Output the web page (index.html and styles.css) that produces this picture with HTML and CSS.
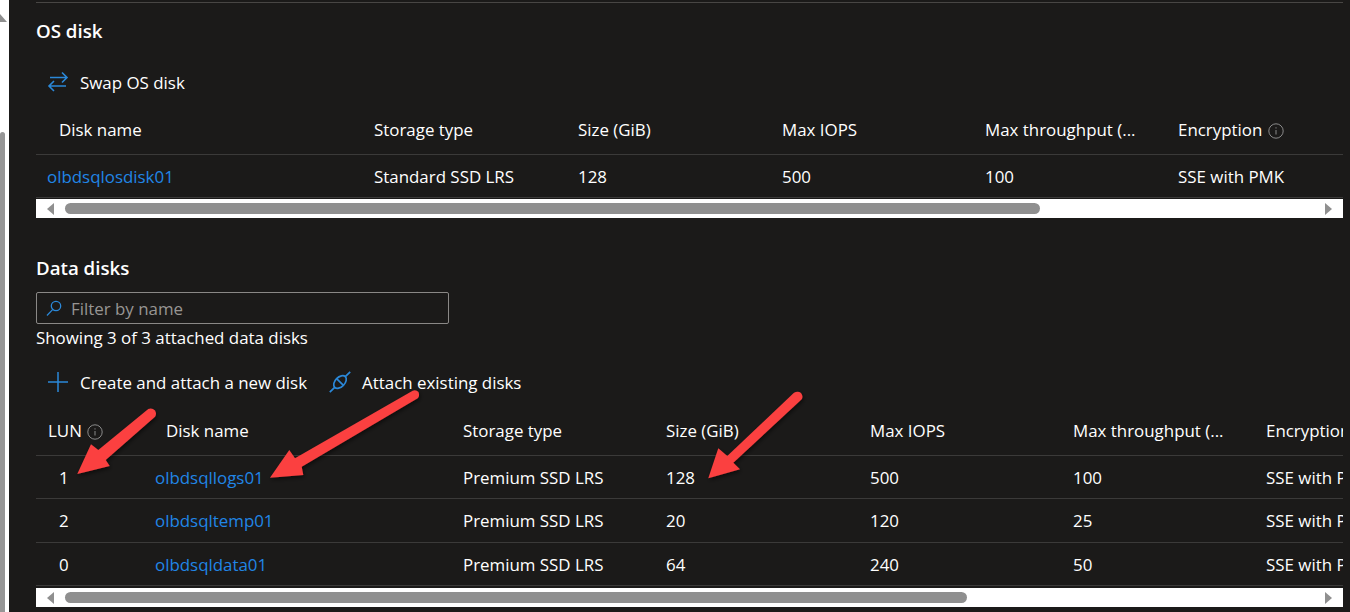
FILE: index.html
```html
<!DOCTYPE html>
<html lang="en">
<head>
<meta charset="utf-8">
<title>Disks</title>
<link rel="stylesheet" href="styles.css">
</head>
<body>
<div class="page">
  <aside class="outer-scroll">
    <div class="outer-track">
      <svg class="outer-arrow" width="9" height="10" viewBox="0 0 9 10"><path d="M0 9 L7 9 L0 1 Z" fill="#8f8f8f"/></svg>
      <div class="outer-thumb"></div>
    </div>
  </aside>
  <main class="content">
    <section class="os-section">
      <h2 class="heading os-heading">OS disk</h2>
      <div class="toolbar os-toolbar">
        <button class="tool swap">
          <svg class="icon" width="22" height="22" viewBox="0 0 22 22" fill="none" stroke="#2b88d8" stroke-width="1.6"><path d="M3 6.500H20M15 1.500L20 6.500L15 11.500"/><path d="M19 15H2M7 10L2 15L7 20"/></svg>
          <span>Swap OS disk</span>
        </button>
      </div>
      <div class="table os-table">
        <div class="row head">
          <div class="cell pad-name">Disk name</div><div class="cell">Storage type</div><div class="cell">Size (GiB)</div><div class="cell">Max IOPS</div><div class="cell">Max throughput (...</div>
          <div class="cell">Encryption <svg class="info" width="16" height="16" viewBox="0 0 16 16"><circle cx="8" cy="8" r="7.2" fill="none" stroke="#8a8a8a"/><path d="M8 7v4.500M8 4.300v1.200" stroke="#8a8a8a"/></svg></div>
        </div>
        <div class="row">
          <div class="cell"><a class="link">olbdsqlosdisk01</a></div><div class="cell">Standard SSD LRS</div><div class="cell">128</div><div class="cell">500</div><div class="cell">100</div><div class="cell">SSE with PMK</div>
        </div>
      </div>
      <div class="hscroll"><i class="arrow-left"></i><div class="track"><div class="thumb os-thumb"></div></div><i class="arrow-right"></i></div>
    </section>

    <section class="data-section">
      <h2 class="heading data-heading">Data disks</h2>
      <div class="filter">
        <svg class="filter-icon" width="16" height="17" viewBox="0 0 16 17" fill="none" stroke="#2b88d8" stroke-width="1.300"><circle cx="10" cy="6" r="4.700"/><path d="M6.600 9.600L1 15.500"/></svg>
        <span>Filter by name</span>
      </div>
      <p class="count">Showing 3 of 3 attached data disks</p>
      <div class="toolbar data-toolbar">
        <button class="tool add">
          <svg class="icon" width="22" height="22" viewBox="0 0 22 22" fill="none" stroke="#2b88d8" stroke-width="1.500"><path d="M11 1V21M1 11H21"/></svg>
          <span>Create and attach a new disk</span>
        </button>
        <button class="tool attach">
          <svg class="icon" width="22" height="22" viewBox="0 0 22 22" fill="none" stroke="#2b88d8" stroke-width="1.700"><ellipse cx="11" cy="11" rx="7.500" ry="4.800" transform="rotate(-45 11 11)"/><path d="M7.800 7.800L14.200 14.200M0.800 21.200L5.700 16.300M16.300 5.700L21.200 0.800"/></svg>
          <span>Attach existing disks</span>
        </button>
      </div>
      <div class="table data-table">
        <div class="row head">
          <div class="cell lun-head">LUN <svg class="info" width="16" height="16" viewBox="0 0 16 16"><circle cx="8" cy="8" r="7.200" fill="none" stroke="#8a8a8a"/><path d="M8 7v4.500M8 4.300v1.200" stroke="#8a8a8a"/></svg></div>
          <div class="cell pad-name">Disk name</div><div class="cell">Storage type</div><div class="cell">Size (GiB)</div><div class="cell">Max IOPS</div><div class="cell">Max throughput (...</div><div class="cell">Encryption</div>
        </div>
        <div class="row">
          <div class="cell lun">1</div><div class="cell"><a class="link">olbdsqllogs01</a></div><div class="cell">Premium SSD LRS</div><div class="cell">128</div><div class="cell">500</div><div class="cell">100</div><div class="cell">SSE with PMK</div>
        </div>
        <div class="row">
          <div class="cell lun">2</div><div class="cell"><a class="link">olbdsqltemp01</a></div><div class="cell">Premium SSD LRS</div><div class="cell">20</div><div class="cell">120</div><div class="cell">25</div><div class="cell">SSE with PMK</div>
        </div>
        <div class="row">
          <div class="cell lun">0</div><div class="cell"><a class="link">olbdsqldata01</a></div><div class="cell">Premium SSD LRS</div><div class="cell">64</div><div class="cell">240</div><div class="cell">50</div><div class="cell">SSE with PMK</div>
        </div>
      </div>
      <div class="hscroll"><i class="arrow-left"></i><div class="track"><div class="thumb data-thumb"></div></div><i class="arrow-right"></i></div>
    </section>
  </main>
  <svg class="annotations" width="1350" height="612" viewBox="0 0 1350 612" aria-hidden="true">
    <defs><filter id="sh" x="-20%" y="-20%" width="140%" height="140%"><feDropShadow dx="1" dy="2" stdDeviation="2" flood-color="#000" flood-opacity=".55"/></filter></defs>
    <g filter="url(#sh)" fill="#fb4141">
      <path d="M77.300 474 L91 444.300 L98.300 450 L148.300 409 Q152 407.500 155 410.500 Q157 414 155 416.700 L105.700 460 L109.700 466 Z"/>
      <path d="M270 477.700 L289.300 450 L295 458.300 L412.700 390.700 Q416 389.500 418.500 392 Q420 396 417.700 398.300 L301.700 466.700 L303.300 475 Z"/>
      <path d="M708.300 478.300 L718.300 448.300 L727.300 456 L794 392.700 Q798 390.500 801 393 Q803.500 396.500 801.700 399.300 L733.300 462.700 L740 469.300 Z"/>
    </g>
  </svg>
</div>
</body>
</html>
```
FILE: styles.css
```css
* { box-sizing: border-box; }
html, body { margin: 0; padding: 0; }
body {
  width: 1350px;
  height: 612px;
  overflow: hidden;
  background: #1b1a19;
  color: #fff;
  font-family: "Open Sans", "Noto Sans", "Liberation Sans", sans-serif;
  font-size: 16.900px;
}
.page { display: flex; position: relative; width: 1350px; height: 612px; }
.outer-scroll { width: 9px; height: 612px; flex: none; background: #fff; }
.outer-track { display: flex; flex-direction: column; height: 100%; }
.outer-arrow { margin-top: 13px; flex: none; display: block; }
.outer-thumb { margin-top: 109px; width: 5px; flex: 1; background: #969696; border-radius: 3px 3px 0 0; }
.content { width: 1307px; margin-left: 27px; flex: none; padding-top: 2px; }
.os-section { border-top: 1px solid #484644; }
.heading { margin: 0; font-size: 18.700px; font-weight: 600; line-height: 22px; }
.os-heading { padding-top: 17px; }
.toolbar { display: flex; }
.os-toolbar { margin-top: 22px; height: 36px; padding-left: 11px; }
.tool {
  display: flex; align-items: center; gap: 11px;
  background: none; border: 0; padding: 0; margin: 0;
  color: #fff; font: inherit; height: 36px;
}
.data-toolbar { margin-top: 15px; height: 36px; padding-left: 11px; gap: 22px; }
.row { display: grid; align-items: center; border-bottom: 1px solid #3b3a39; white-space: nowrap; overflow: hidden; }
.table { margin-top: 6px; }
.os-table { margin-top: 5px; }
.os-table .row { grid-template-columns: 327px 204px 204px 203px 193px 130px; height: 43px; padding-left: 11px; }
.os-table .head { height: 50px; }
.os-table .pad-name { padding-left: 12px; }
.data-table .row { grid-template-columns: 107px 308px 203px 204px 203px 193px 77px; padding-left: 12px; height: 44px; }
.data-table .head { height: 50px; }
.data-table .row:nth-child(2), .data-table .row:last-child { height: 43px; }
.data-table .pad-name { padding-left: 11px; }
.lun { padding-left: 11px; }
.cell { overflow: hidden; }
.link { color: #2186e6; }
.info { vertical-align: -3px; margin-left: 1px; }
.hscroll { display: flex; align-items: center; height: 19px; background: #fff; }
.os-table + .hscroll { margin-top: 1px; }
.data-table + .hscroll { margin-top: 2px; }
.track { flex: 1; height: 11px; margin: 0 8px 0 11px; }
.thumb { height: 11px; background: #8f8f8f; border-radius: 6px; }
.os-thumb { width: 975px; }
.data-thumb { width: 902px; }
.arrow-left, .arrow-right { display: block; width: 0; height: 0; flex: none; border-top: 6px solid transparent; border-bottom: 6px solid transparent; }
.arrow-left { margin-left: 11px; border-right: 7px solid #8f8f8f; }
.arrow-right { margin-right: 11px; border-left: 7px solid #8f8f8f; }
.data-heading { padding-top: 39px; }
.filter {
  display: flex; align-items: center; gap: 9px;
  width: 413px; height: 32px; margin-top: 13px; padding-left: 9px;
  border: 1px solid #8a8886; border-radius: 2px; color: #979593;
}
.count { margin: 3px 0 0; line-height: 22px; }
.annotations { position: absolute; left: 0; top: 0; pointer-events: none; }
```
